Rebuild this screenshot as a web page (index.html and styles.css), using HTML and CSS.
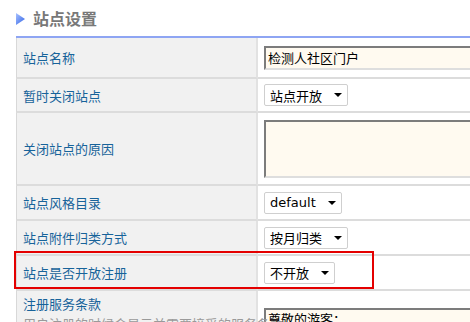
FILE: index.html
```html
<!doctype html>
<html>
    <head>
        <meta charset="UTF-8">
        <title>站点设置</title>
        <link rel="stylesheet" href="styles.css">
    </head>

    <body>
        <div class="page">
            <!--Heading Start-->
            <div class="heading">
                <svg class="arrow" width="9" height="12" viewBox="0 0 9 12">
                    <defs>
                        <linearGradient id="arr" x1="0" y1="0" x2="1" y2="1">
                            <stop offset="0" stop-color="#a9c2ff"/>
                            <stop offset="1" stop-color="#2f62e6"/>
                        </linearGradient>
                    </defs>
                    <polygon points="0,0 9,6 0,12" fill="url(#arr)"/>
                </svg>
                <h1>站点设置</h1>
            </div>
            <!--Heading End-->

            <!--Settings Start-->
            <table class="settings">
                <colgroup>
                    <col class="col-label">
                    <col class="col-value">
                </colgroup>
                <tr class="r1">
                    <td class="label"><div class="cell">站点名称</div></td>
                    <td class="value"><div class="cell"><input class="text" value="检测人社区门户"></div></td>
                </tr>
                <tr class="r2">
                    <td class="label"><div class="cell">暂时关闭站点</div></td>
                    <td class="value"><div class="cell"><span class="select">站点开放<i class="caret"></i></span></div></td>
                </tr>
                <tr class="r3">
                    <td class="label"><div class="cell">关闭站点的原因</div></td>
                    <td class="value"><div class="cell"><textarea class="area"></textarea></div></td>
                </tr>
                <tr class="r4">
                    <td class="label"><div class="cell">站点风格目录</div></td>
                    <td class="value"><div class="cell"><span class="select">default<i class="caret"></i></span></div></td>
                </tr>
                <tr class="r5">
                    <td class="label"><div class="cell">站点附件归类方式</div></td>
                    <td class="value"><div class="cell"><span class="select">按月归类<i class="caret"></i></span></div></td>
                </tr>
                <tr class="r6">
                    <td class="label"><div class="cell">站点是否开放注册</div></td>
                    <td class="value"><div class="cell"><span class="select">不开放<i class="caret"></i></span></div></td>
                </tr>
                <tr class="r7">
                    <td class="label">
                        <div class="cell">
                            注册服务条款
                            <span class="hint">用户注册的时候会显示并需要接受的服务条款</span>
                        </div>
                    </td>
                    <td class="value"><div class="cell"><textarea class="area">尊敬的游客：</textarea></div></td>
                </tr>
            </table>
            <!--Settings End-->

            <!--annotation box-->
            <div class="mark"></div>
        </div>
    </body>
</html>
```

FILE: styles.css
```css
body{
    margin: 0;
    padding: 0;
    background: #fff;
    font-family: "DejaVu Sans", "Noto Sans CJK SC", sans-serif;
    font-size: 13px;
    overflow: hidden;
}

.page{
    position: relative;
    width: 470px;
    height: 322px;
    overflow: hidden;
}

/* Heading */
.heading{
    display: flex;
    align-items: center;
    height: 36px;
    padding-left: 16px;
}
.heading .arrow{
    display: block;
    margin-top: 2px;
}
.heading h1{
    margin: 0 0 0 8px;
    font-family: "Noto Sans CJK SC", sans-serif;
    font-size: 16px;
    font-weight: bold;
    color: #787878;
}
/* Heading */

/* Settings table */
.settings{
    margin-left: 16px;
    width: 720px;
    table-layout: fixed;
    border-collapse: separate;
    border-spacing: 0;
    border-top: 2px solid #8ea5f3;
}
.settings .col-label{
    width: 242px;
}
.settings td{
    padding: 0;
    border-bottom: 2px solid #dcdcdc;
    vertical-align: top;
}
.settings .label{
    padding-left: 6px;
    background: #f1f1f1;
    color: #17639a;
    border-left: 1px solid #d8d8d8;
    border-right: 2px solid #e2e2e2;
    font-family: "Noto Sans CJK SC", sans-serif;
}
.settings .value{
    padding-left: 6px;
}
.settings .cell{
    display: flex;
    align-items: center;
}

.r1 .cell{ height: 39px; }
.r2 .cell{ height: 32px; }
.r3 .cell{ height: 71px; }
.r4 .cell, .r5 .cell, .r6 .cell{ height: 33px; }

.r7 .cell{
    display: block;
    height: 40px;
    line-height: 20px;
    padding-top: 3px;
}
.r7 .value .cell{
    padding-top: 17px;
}
.r7 .hint{
    display: block;
    color: #9a9a9a;
    white-space: nowrap;
}

/* Inputs */
.text, .area{
    box-sizing: border-box;
    width: 300px;
    margin: 0;
    padding: 0 2px;
    background: #fffaf0;
    border: 2px solid;
    border-color: #7c7c7c #dedede #dedede #7c7c7c;
    font-family: "Noto Sans CJK SC", sans-serif;
    font-size: 13px;
    color: #000;
    outline: none;
}
.text{
    height: 24px;
}
.area{
    display: block;
    height: 58px;
    resize: none;
    line-height: 18px;
}

.select{
    display: inline-flex;
    align-items: center;
    box-sizing: border-box;
    height: 22px;
    padding: 0 5px;
    background: #fff;
    border: 1px solid #cfcfcf;
    border-radius: 2px;
    color: #000;
    font-size: 13px;
}
.select .caret{
    width: 0;
    height: 0;
    margin-left: 12px;
    border-left: 4px solid transparent;
    border-right: 4px solid transparent;
    border-top: 4px solid #000;
}

/* red annotation */
.mark{
    position: absolute;
    left: 14px;
    top: 251px;
    width: 360px;
    height: 38px;
    box-sizing: border-box;
    border: 2px solid #e40000;
}
```
